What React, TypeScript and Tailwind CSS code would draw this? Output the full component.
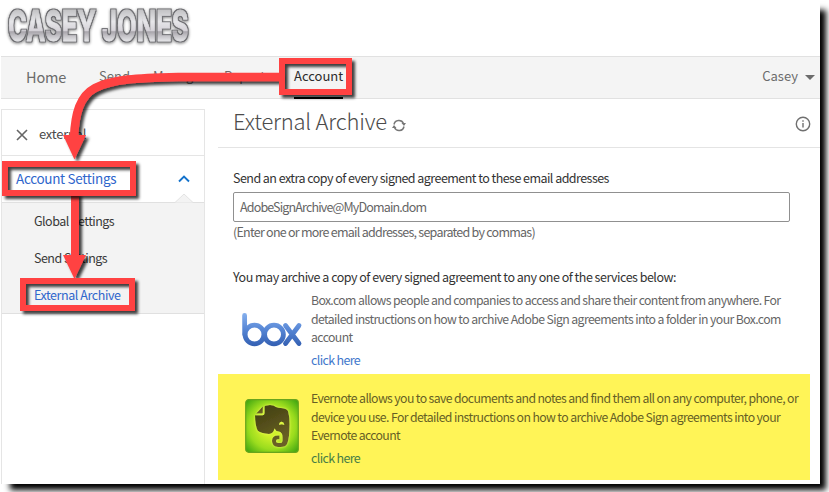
import React from "react";

const RED = "#ff4242";

function Logo() {
  return (
    <svg width="200" height="56" viewBox="0 0 200 56" className="block">
      <defs>
        <linearGradient id="metal" gradientUnits="userSpaceOnUse" x1="0" y1="8" x2="0" y2="42">
          <stop offset="0" stopColor="#bdbdbf" />
          <stop offset="0.4" stopColor="#e6e6e9" />
          <stop offset="0.66" stopColor="#d6d3d9" />
          <stop offset="0.7" stopColor="#a9a6ac" />
          <stop offset="0.95" stopColor="#e0e0e3" />
        </linearGradient>
        <filter id="glow" filterUnits="userSpaceOnUse" x="0" y="0" width="200" height="56">
          <feMorphology in="SourceAlpha" operator="dilate" radius="1" result="fat" />
          <feFlood floodColor="#6c6c70" />
          <feComposite in2="fat" operator="in" result="edge" />
          <feGaussianBlur in="fat" stdDeviation="1.8" result="soft" />
          <feOffset in="soft" dx="0" dy="1" result="low" />
          <feComponentTransfer in="low" result="shadow">
            <feFuncA type="linear" slope="0.5" />
          </feComponentTransfer>
          <feMerge>
            <feMergeNode in="shadow" />
            <feMergeNode in="edge" />
            <feMergeNode in="SourceGraphic" />
          </feMerge>
        </filter>
      </defs>
      <g filter="url(#glow)">
        <text
          x="0"
          y="40.500"
          transform="translate(8 0) scale(0.62 1)"
          textLength="291"
          lengthAdjust="spacingAndGlyphs"
          fontFamily="Inter,'DejaVu Sans',sans-serif"
          fontWeight="700"
          fontSize="43"
          fill="url(#metal)"
          stroke="url(#metal)"
          strokeWidth="0.8"
        >
          CASEY JONES
        </text>
      </g>
    </svg>
  );
}

function BoxLogo() {
  return (
    <svg width="62" height="36" viewBox="0 0 62 36">
      <defs>
        <linearGradient id="boxblue" gradientUnits="userSpaceOnUse" x1="0" y1="0" x2="0" y2="34">
          <stop offset="0" stopColor="#86b0ee" />
          <stop offset="0.5" stopColor="#5585d4" />
          <stop offset="1" stopColor="#315db0" />
        </linearGradient>
      </defs>
      <g fill="none" stroke="url(#boxblue)" strokeWidth="4.8" strokeLinecap="round">
        <path d="M2.600 2.500L2.700 21.500" />
        <circle cx="12.500" cy="21.500" r="9.400" />
        <circle cx="32" cy="21.500" r="9.400" />
        <path d="M43.500 12.500L57 30.500M57 12.500L43.500 30.500" />
      </g>
    </svg>
  );
}

function EvernoteLogo() {
  return (
    <svg width="54" height="54" viewBox="0 0 54 54">
      <defs>
        <radialGradient id="green" cx="0.5" cy="0.5" r="0.68">
          <stop offset="0.3" stopColor="#d0f02a" />
          <stop offset="0.65" stopColor="#9bdc1e" />
          <stop offset="1" stopColor="#3fa510" />
        </radialGradient>
        <linearGradient id="hide" x1="0" y1="0" x2="0.4" y2="1">
          <stop offset="0" stopColor="#3e3c10" />
          <stop offset="1" stopColor="#6a6125" />
        </linearGradient>
        <filter id="halo" x="-20%" y="-20%" width="140%" height="140%">
          <feDropShadow dx="0" dy="0" stdDeviation="1.2" floodColor="#ecff5a" floodOpacity="1" />
        </filter>
      </defs>
      <rect x="0.7" y="0.7" width="52.6" height="52.6" rx="3" fill="url(#green)" stroke="#68a51c" strokeWidth="1.2" />
      <g filter="url(#halo)">
        <path d="M17.800 7.500L11.200 14.500H16.800Q17.800 14.500 17.800 13.500Z" fill="url(#hide)" />
        <path
          d="M19.500 7.500Q20.500 6 25 6Q29 6 31 8Q33 9 38 9.300Q42.500 9.700 43.300 13Q44.600 18 44.600 25Q44.500 39 42.300 44.500Q41 48 35.500 48H33Q27 47.500 27 42Q27 36.500 32.500 36.500H34.500V40.200H33Q31 40.200 31 42.200Q31 44 33.500 44H35.500Q37.500 44 37.500 41.500V38Q37.500 33 33.500 32.500Q30.500 32 29.500 29.500Q28.500 34.500 24 35Q15 34 12.600 31.500Q10 26 10 16.200H17.500Q19.500 16.200 19.500 14ZM34 25.700Q37.500 24.700 39.300 26Q39 23 36.800 22.700Q34.500 22.700 34 25.700Z"
          fill="url(#hide)"
          fillRule="evenodd"
        />
      </g>
    </svg>
  );
}

function Annotations() {
  return (
    <svg className="pointer-events-none absolute left-0 top-0" width="820" height="484" viewBox="0 0 820 484">
      <defs>
        <filter id="shade" filterUnits="userSpaceOnUse" x="0" y="40" width="400" height="300">
          <feDropShadow dx="3" dy="3" stdDeviation="1.8" floodColor="#000" floodOpacity="0.75" />
        </filter>
      </defs>
      <g filter="url(#shade)">
        <path d="M281 77H178C138 78 112 79 95 88C80 96 75 113 74 138" fill="none" stroke={RED} strokeWidth="8.500" />
        <path d="M63 135L86 135L74.500 159.500Z" fill={RED} />
        <path d="M75 193V258" stroke={RED} strokeWidth="8" />
        <path d="M63 255H86L74.500 279Z" fill={RED} />
      </g>
      <g fill="none" stroke={RED} strokeWidth="6" filter="url(#shade)">
        <rect x="282" y="61" width="67" height="31" />
        <rect x="5" y="164" width="128" height="29" />
        <rect x="23" y="281" width="109" height="27" />
      </g>
    </svg>
  );
}

function Service({ logo, lines, className }: { logo: React.ReactNode; lines: React.ReactNode; className?: string }) {
  return (
    <div className={"flex w-[592px] " + (className ?? "")}>
      <div className="flex w-[93px] shrink-0 pl-[24px]">{logo}</div>
      <div className="whitespace-nowrap text-[12.250px] leading-[18.500px]">{lines}</div>
    </div>
  );
}

export default function App() {
  return (
    <div className="h-[492px] w-[829px] overflow-hidden bg-white font-['Noto_Sans_CJK_SC','Noto_Sans',sans-serif] text-[#4b4b4b]">
      <div className="relative h-[484px] w-[820px] bg-white shadow-[7.500px_7.500px_6px_-2px_#000]">
        <header className="h-[56px]">
          <Logo />
        </header>
        <nav className="ml-px flex h-[43px] w-[819px] items-center whitespace-nowrap border-y border-[#e1e1e1] bg-[#f4f4f4] text-[13px] leading-5 text-[#6b6b6b]">
          <span className="ml-[25px] w-[73px] pb-px text-[14.500px] tracking-[-0.15px]">Home</span>
          <span className="w-[54px] pb-1">Send</span>
          <span className="w-[71px] pb-1">Manage</span>
          <span className="w-[70px] pb-1">Reports</span>
          <span className="flex h-[42px] w-[49px] items-center border-b-2 border-black pb-0.5 text-[#2c2c2c]">Account</span>
          <span className="ml-auto pb-1">Casey</span>
          <span className="ml-[7px] mr-[5px] border-x-[5px] border-t-[5px] border-x-transparent border-t-[#6b6b6b]" />
        </nav>
        <div className="flex h-[385px]">
          <aside className="ml-px mt-[10px] w-[204px] shrink-0 whitespace-nowrap border border-b-0 border-[#e5e5e5]">
            <div className="flex h-[46px] items-center border-b border-[#e5e5e5] pt-[2px] text-[13px] tracking-[-0.25px]">
              <svg className="ml-[14px] mr-[11px] mt-0.5" width="12" height="12" viewBox="0 0 12 12" stroke="#666" strokeWidth="1.600">
                <path d="M1 1L11 11M11 1L1 11" />
              </svg>
              external
            </div>
            <div className="relative flex h-[47px] items-center border-b border-[#e0e0e0] pb-px pl-[14px] text-[13.500px] tracking-[-0.31px] text-[#2f66cc]">
              <span>Account Settings</span>
              <svg className="absolute left-[176px] top-[19px]" width="12" height="8" viewBox="0 0 12 8" fill="none" stroke="#1473cc" strokeWidth="1.900">
                <path d="M1 6.500L6 1.500L11 6.500" />
              </svg>
              <svg className="absolute -bottom-px left-[173px]" width="18" height="10" viewBox="0 0 18 10">
                <path d="M0 9.500L9 1L18 9.500" fill="#f3f3f3" stroke="#e3e3e3" />
              </svg>
            </div>
            <div className="flex h-[111px] flex-col border-b border-[#e0e0e0] bg-[#f3f3f3] pl-[32px] text-[12.500px] leading-[37px] tracking-[-0.52px] text-[#3a3a3a]">
              <span className="-mt-px">Global Settings</span>
              <span>Send Settings</span>
              <span className="tracking-[-0.42px] text-[#2f66cc]">External Archive</span>
            </div>
          </aside>
          <main className="ml-[13px] w-[602px] whitespace-nowrap text-[12.500px]">
            <div className="flex h-[49px] items-center border-b border-[#e4e4e4] pl-[15px]">
              <h1 className="-mt-1.5 text-[22px] font-light leading-8 tracking-[-0.22px]">External Archive</h1>
              <svg className="ml-[5px] mt-1" width="14" height="13" viewBox="0 0 14 13" fill="none" stroke="#777" strokeWidth="1.500">
                <path d="M2 5.500A5 5 0 0 1 11.500 4.500M12 7.500A5 5 0 0 1 2.500 8.500" />
                <path d="M9.500 4H14L12 7ZM4.500 9H0L2 6Z" fill="#777" stroke="none" />
              </svg>
              <svg className="ml-auto mr-[9px] mt-[2px]" width="16" height="16" viewBox="0 0 16 16" fill="none" stroke="#707070" strokeWidth="1.400">
                <circle cx="8" cy="8" r="6.700" />
                <path d="M8 7V11.500M8 4.200V5.700" />
              </svg>
            </div>
            <div className="pl-[15px] pt-[21px] leading-[18px] text-[#333]">
              <p className="tracking-[-0.54px]">Send an extra copy of every signed agreement to these email addresses</p>
              <div className="mt-[5px] flex h-[30px] w-[557px] items-center rounded-[2px] border border-[#909090] pl-[6px] tracking-[-0.84px] text-[#666]">
                AdobeSignArchive@MyDomain.dom
              </div>
              <p className="mt-px tracking-[-0.75px] text-[#666]">(Enter one or more email addresses, separated by commas)</p>
              <p className="mt-[27px] tracking-[-0.5px]">You may archive a copy of every signed agreement to any one of the services below:</p>
            </div>
            <Service
              className="mt-[5px] h-[83px] text-[#666]"
              logo={<div className="mt-[22px]"><BoxLogo /></div>}
              lines={
                <>
                  <p className="tracking-[-0.630px]">Box.com allows people and companies to access and share their content from anywhere. For</p>
                  <p className="tracking-[-0.610px]">detailed instructions on how to archive Adobe Sign agreements into a folder in your Box.com</p>
                  <p className="tracking-[-0.600px]">account</p>
                  <p className="mt-[4px] tracking-[-0.650px] text-[12.500px] text-[#3f77cc]">click here</p>
                </>
              }
            />
            <Service
              className="h-[106px] bg-[#fff457] pt-[15px] text-[#665f25]"
              logo={<div className="ml-[3px] mt-[10px]"><EvernoteLogo /></div>}
              lines={
                <>
                  <p className="tracking-[-0.610px]">Evernote allows you to save documents and notes and find them all on any computer, phone, or</p>
                  <p className="tracking-[-0.610px]">device you use. For detailed instructions on how to archive Adobe Sign agreements into your</p>
                  <p className="tracking-[-0.650px]">Evernote account</p>
                  <p className="mt-1 tracking-[-0.650px] text-[12.500px] text-[#477d45]">click here</p>
                </>
              }
            />
          </main>
        </div>
        <Annotations />
      </div>
    </div>
  );
}
